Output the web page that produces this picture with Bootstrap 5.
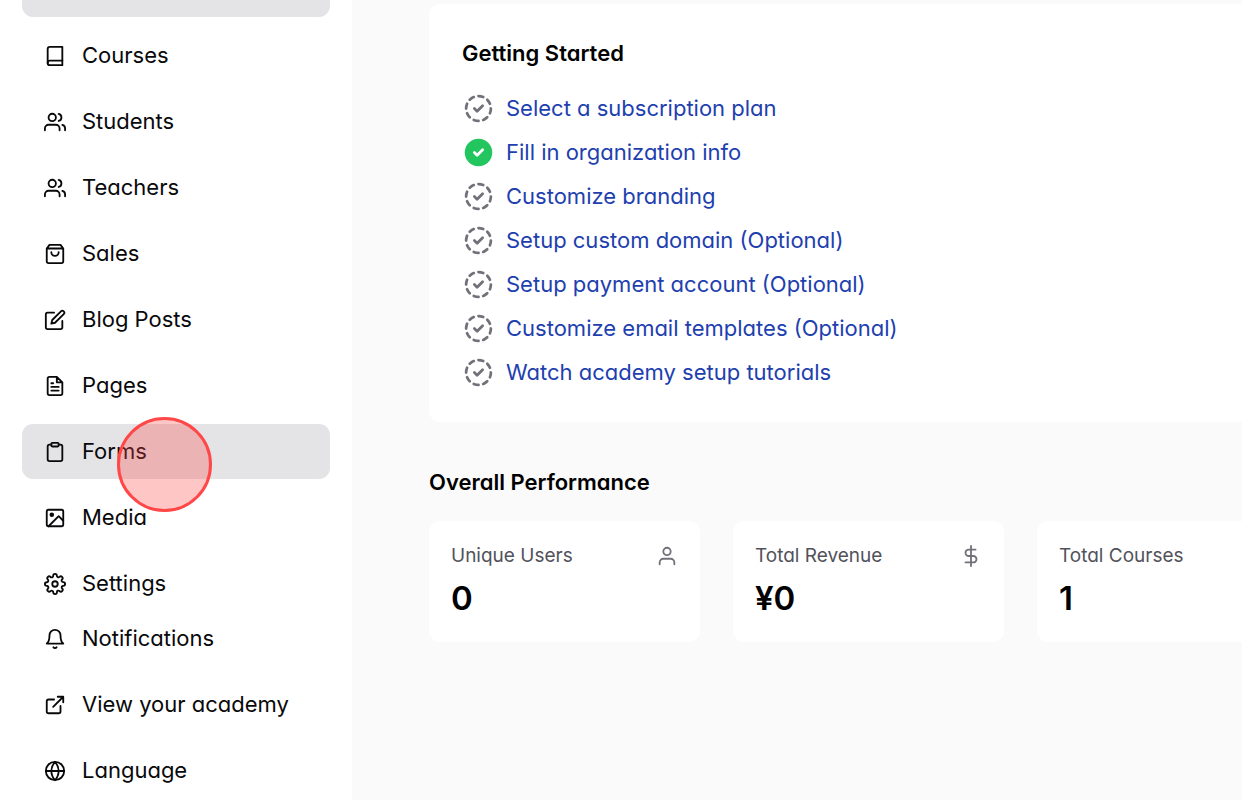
<!DOCTYPE html>
<html lang="en">
<head>
<meta charset="utf-8">
<meta name="viewport" content="width=device-width, initial-scale=1">
<title>Academy dashboard</title>
<link href="https://cdn.jsdelivr.net/npm/bootstrap@5.3.0/dist/css/bootstrap.min.css" rel="stylesheet">
<style>
  body { font-family: Inter, sans-serif; font-feature-settings: "cv11"; font-size: 22px; line-height: 33px; color: #09090b; background: #fafafa; }
  .sidebar { width: 352px; padding: 0 22px; }
  .side-nav { gap: 11px; }
  .side-link { height: 55px; padding: 0 22px; gap: 16px; border-radius: 11px; color: #09090b; }
  .side-link:hover, .side-link.current { background: #e4e4e7; color: #09090b; }
  .side-top { height: 17px; border-radius: 0 0 11px 11px; background: #e4e4e7; }
  .ico { width: 22px; height: 22px; flex: none; fill: none; stroke: currentColor; stroke-width: 2; stroke-linecap: round; stroke-linejoin: round; }
  .click-mark { left: 95px; top: -7px; width: 95px; height: 95px; border: 3px solid #ff4747; background: rgba(255, 71, 71, .31); pointer-events: none; z-index: 2; }
  .content { padding: 4px 0 0 77px; min-width: 0; }
  .start-card { padding: 33px; border-radius: 11px 0 0 11px; }
  .heading { font-size: 22px; line-height: 33px; font-weight: 600; margin: 0 0 22px; color: #000; }
  .steps { gap: 11px; }
  .steps a { gap: 11px; color: #1e40af; }
  .step-ico { width: 33px; height: 33px; color: #71717a; }
  .performance { margin-top: 44px; }
  .stats { gap: 33px; }
  .stat { flex: 0 0 271px; padding: 22px; border-radius: 11px; }
  .stat-name { font-size: 19px; line-height: 26px; color: #52525b; margin-bottom: 7px; }
  .stat-name .ico { color: #71717a; }
  .stat-value { font-size: 33px; line-height: 44px; font-weight: 600; color: #000; }
</style>
</head>
<body class="overflow-hidden">
<svg class="d-none" aria-hidden="true">
  <symbol id="pending" viewBox="0 0 24 24"><path d="M8.56 3.69a9 9 0 0 0-2.92 1.95M3.69 8.56A9 9 0 0 0 3 12M3.69 15.44a9 9 0 0 0 1.95 2.92M8.56 20.31A9 9 0 0 0 12 21M15.44 20.31a9 9 0 0 0 2.92-1.95M20.31 15.44A9 9 0 0 0 21 12M20.31 8.56a9 9 0 0 0-1.95-2.92M15.44 3.69A9 9 0 0 0 12 3M9 12l2 2 4-4"/></symbol>
  <symbol id="done" viewBox="0 0 24 24"><circle cx="12" cy="12" r="10" fill="#22c55e" stroke="none"/><path stroke="#fff" d="M9 12l2 2 4-4"/></symbol>
  <symbol id="users" viewBox="0 0 24 24"><path d="M17 21v-2a4 4 0 0 0-4-4H5a4 4 0 0 0-4 4v2M23 21v-2a4 4 0 0 0-3-3.87M16 3.13a4 4 0 0 1 0 7.75"/><circle cx="9" cy="7" r="4"/></symbol>
</svg>
<div class="d-flex min-vh-100">
  <aside class="sidebar bg-white flex-shrink-0">
    <nav class="side-nav d-flex flex-column" aria-label="Academy">
      <div class="side-top"></div>
      <a href="#" class="side-link d-flex align-items-center text-decoration-none"><svg class="ico" viewBox="0 0 24 24"><path d="M4 19.5A2.5 2.5 0 0 1 6.5 17H20"/><path d="M6.500 2H20v20H6.500A2.500 2.500 0 0 1 4 19.500v-15A2.500 2.500 0 0 1 6.500 2z"/></svg>Courses</a>
      <a href="#" class="side-link d-flex align-items-center text-decoration-none"><svg class="ico"><use href="#users"/></svg>Students</a>
      <a href="#" class="side-link d-flex align-items-center text-decoration-none"><svg class="ico"><use href="#users"/></svg>Teachers</a>
      <a href="#" class="side-link d-flex align-items-center text-decoration-none"><svg class="ico" viewBox="0 0 24 24"><path d="M6 2L3 6v14a2 2 0 0 0 2 2h14a2 2 0 0 0 2-2V6l-3-4zM3 6h18M16 10a4 4 0 0 1-8 0"/></svg>Sales</a>
      <a href="#" class="side-link d-flex align-items-center text-decoration-none"><svg class="ico" viewBox="0 0 24 24"><path d="M11 4H4a2 2 0 0 0-2 2v14a2 2 0 0 0 2 2h14a2 2 0 0 0 2-2v-7"/><path d="M18.500 2.500a2.121 2.121 0 0 1 3 3L12 15l-4 1 1-4z"/></svg>Blog Posts</a>
      <a href="#" class="side-link d-flex align-items-center text-decoration-none"><svg class="ico" viewBox="0 0 24 24"><path d="M14 2H6a2 2 0 0 0-2 2v16a2 2 0 0 0 2 2h12a2 2 0 0 0 2-2V8zM14 2v6h6M16 13H8M16 17H8M10 9H8"/></svg>Pages</a>
      <a href="#" class="side-link current position-relative d-flex align-items-center text-decoration-none" aria-current="page"><svg class="ico" viewBox="0 0 24 24"><path d="M16 4h2a2 2 0 0 1 2 2v14a2 2 0 0 1-2 2H6a2 2 0 0 1-2-2V6a2 2 0 0 1 2-2h2"/><rect x="8" y="2" width="8" height="4" rx="1"/></svg>Forms<span class="click-mark position-absolute rounded-circle"></span></a>
      <a href="#" class="side-link d-flex align-items-center text-decoration-none"><svg class="ico" viewBox="0 0 24 24"><rect x="3" y="3" width="18" height="18" rx="2"/><circle cx="8.500" cy="8.500" r="1.500" fill="currentColor"/><path d="M21 15l-5-5L5 21"/></svg>Media</a>
      <a href="#" class="side-link d-flex align-items-center text-decoration-none"><svg class="ico" viewBox="0 0 24 24"><circle cx="12" cy="12" r="3"/><path d="M19.400 15a1.650 1.650 0 0 0 .33 1.820l.06.06a2 2 0 0 1-2.830 2.830l-.06-.06a1.650 1.650 0 0 0-1.820-.33 1.650 1.650 0 0 0-1 1.510V21a2 2 0 0 1-4 0v-.09A1.650 1.650 0 0 0 9 19.400a1.650 1.650 0 0 0-1.820.33l-.06.06a2 2 0 0 1-2.830-2.830l.06-.06a1.650 1.650 0 0 0 .33-1.820 1.650 1.650 0 0 0-1.510-1H3a2 2 0 0 1 0-4h.09A1.650 1.650 0 0 0 4.600 9a1.650 1.650 0 0 0-.33-1.820l-.06-.06a2 2 0 0 1 2.830-2.830l.06.06a1.650 1.650 0 0 0 1.820.33H9a1.650 1.650 0 0 0 1-1.510V3a2 2 0 0 1 4 0v.09a1.650 1.650 0 0 0 1 1.510 1.650 1.650 0 0 0 1.820-.33l.06-.06a2 2 0 0 1 2.830 2.830l-.06.06a1.650 1.650 0 0 0-.33 1.820V9a1.650 1.650 0 0 0 1.510 1H21a2 2 0 0 1 0 4h-.09a1.650 1.650 0 0 0-1.510 1z"/></svg>Settings</a>
    </nav>
    <nav class="side-nav d-flex flex-column" aria-label="Account">
      <a href="#" class="side-link d-flex align-items-center text-decoration-none"><svg class="ico" viewBox="0 0 24 24"><path d="M18 8A6 6 0 0 0 6 8c0 7-3 9-3 9h18s-3-2-3-9M13.730 21a2 2 0 0 1-3.460 0"/></svg>Notifications</a>
      <a href="#" class="side-link d-flex align-items-center text-decoration-none"><svg class="ico" viewBox="0 0 24 24"><path d="M18 13v6a2 2 0 0 1-2 2H5a2 2 0 0 1-2-2V8a2 2 0 0 1 2-2h6M15 3h6v6M10 14L21 3"/></svg>View your academy</a>
      <a href="#" class="side-link d-flex align-items-center text-decoration-none"><svg class="ico" viewBox="0 0 24 24"><circle cx="12" cy="12" r="10"/><path d="M2 12h20M12 2a15.300 15.300 0 0 1 4 10 15.300 15.300 0 0 1-4 10 15.300 15.300 0 0 1-4-10 15.300 15.300 0 0 1 4-10z"/></svg>Language</a>
    </nav>
  </aside>
  <main class="content flex-grow-1 overflow-hidden">
    <section class="start-card bg-white">
      <h2 class="heading">Getting Started</h2>
      <ul class="steps list-unstyled d-flex flex-column align-items-start mb-0">
        <li><a href="#" class="d-flex text-decoration-none"><svg class="ico step-ico"><use href="#pending"/></svg>Select a subscription plan</a></li>
        <li><a href="#" class="d-flex text-decoration-none"><svg class="ico step-ico"><use href="#done"/></svg>Fill in organization info</a></li>
        <li><a href="#" class="d-flex text-decoration-none"><svg class="ico step-ico"><use href="#pending"/></svg>Customize branding</a></li>
        <li><a href="#" class="d-flex text-decoration-none"><svg class="ico step-ico"><use href="#pending"/></svg>Setup custom domain (Optional)</a></li>
        <li><a href="#" class="d-flex text-decoration-none"><svg class="ico step-ico"><use href="#pending"/></svg>Setup payment account (Optional)</a></li>
        <li><a href="#" class="d-flex text-decoration-none"><svg class="ico step-ico"><use href="#pending"/></svg>Customize email templates (Optional)</a></li>
        <li><a href="#" class="d-flex text-decoration-none"><svg class="ico step-ico"><use href="#pending"/></svg>Watch academy setup tutorials</a></li>
      </ul>
    </section>
    <section class="performance">
      <h2 class="heading">Overall Performance</h2>
      <div class="stats d-flex">
        <div class="stat bg-white">
          <div class="stat-name d-flex justify-content-between align-items-center">Unique Users<svg class="ico" viewBox="0 0 24 24"><path d="M20 21v-2a4 4 0 0 0-4-4H8a4 4 0 0 0-4 4v2"/><circle cx="12" cy="7" r="4"/></svg></div>
          <div class="stat-value">0</div>
        </div>
        <div class="stat bg-white">
          <div class="stat-name d-flex justify-content-between align-items-center">Total Revenue<svg class="ico" viewBox="0 0 24 24"><path d="M12 1v22M17 5H9.500a3.500 3.500 0 0 0 0 7h5a3.500 3.500 0 0 1 0 7H6"/></svg></div>
          <div class="stat-value">¥0</div>
        </div>
        <div class="stat bg-white">
          <div class="stat-name">Total Courses</div>
          <div class="stat-value">1</div>
        </div>
      </div>
    </section>
  </main>
</div>
<script src="https://cdn.jsdelivr.net/npm/bootstrap@5.3.0/dist/js/bootstrap.bundle.min.js"></script>
</body>
</html>
